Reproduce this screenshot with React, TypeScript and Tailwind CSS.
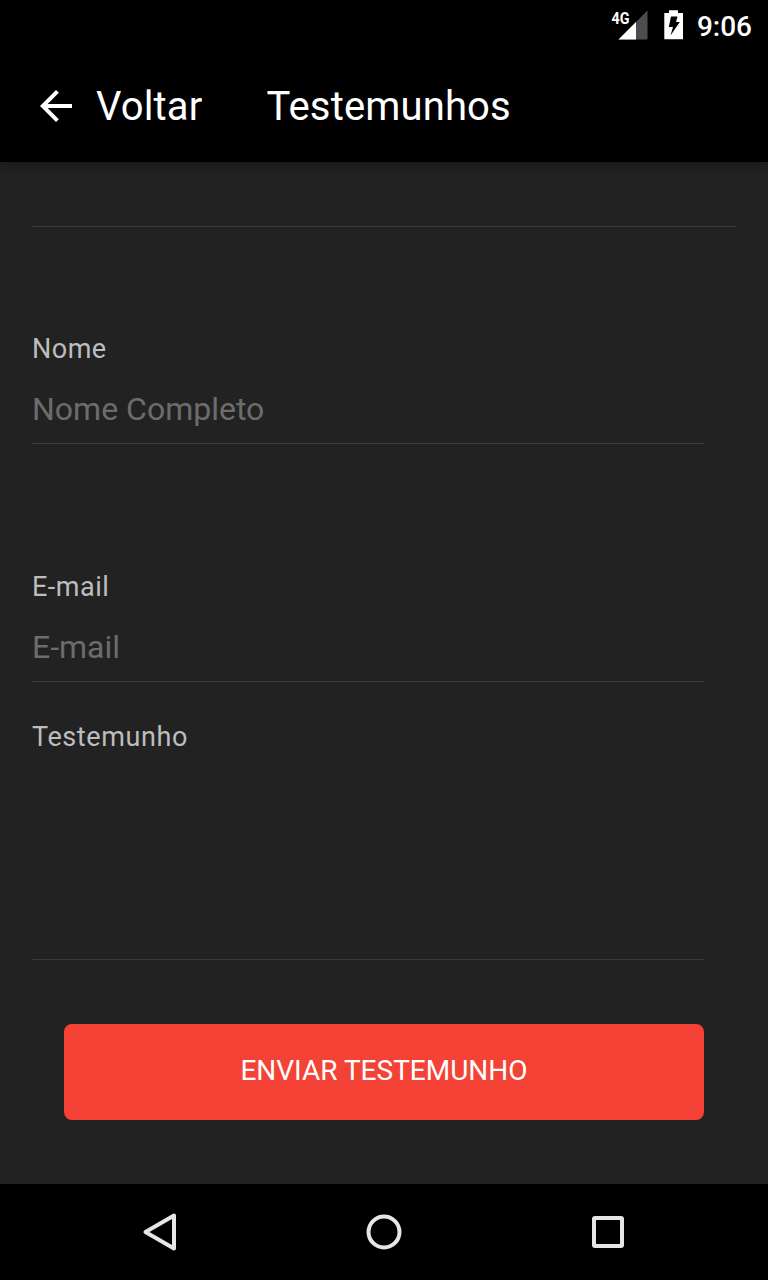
import { MdArrowBack } from "react-icons/md";

const fields = [
    { id: "nome", label: "Nome", placeholder: "Nome Completo" },
    { id: "email", label: "E-mail", placeholder: "E-mail" },
];

const StatusBar = () => {
    return (
        <div className="flex h-12 items-center justify-end pr-4 text-white">
            {/* signal */}
            <svg width="38" height="32" viewBox="0 0 38 32" className="mt-0.5">
                <path d="M37.5 1.5v29H8.5z" fill="#4d4d4d" />
                <path d="M26 13v17.5H8.5z" fill="#fff" />
                <text
                    x="1.5"
                    y="14.5"
                    fill="#fff"
                    fontSize="17"
                    fontWeight="700"
                    textLength="18"
                    lengthAdjust="spacingAndGlyphs"
                >
                    4G
                </text>
            </svg>
            {/* battery */}
            <svg
                width="19"
                height="30"
                viewBox="0 0 19 30"
                className="mt-0.5 ml-4"
            >
                <path d="M5 .3h9V3h5v26.3H.3V3H5z" fill="#fff" />
                <path
                    d="M7 6.5h6.5L12 12h3.8L6.5 25.5 9 17H4.8z"
                    fill="#000"
                />
            </svg>
            <div className="mt-1.5 ml-3.5 text-[28px] leading-8 font-medium">
                9:06
            </div>
        </div>
    );
};

const Header = () => {
    return (
        <header className="relative h-[162px] bg-black text-white shadow-[0_2px_12px_rgba(0,0,0,0.4)]">
            <StatusBar />
            <div className="flex h-[116px] items-center pl-8 text-[40px] tracking-[0.15px]">
                <MdArrowBack size={48} />
                <div className="mt-0.5 ml-4">Voltar</div>
                <h1 className="mt-0.5 ml-16">Testemunhos</h1>
            </div>
        </header>
    );
};

const NavBar = () => {
    return (
        <nav className="flex h-24 items-center justify-center gap-32 bg-black">
            <svg width="96" height="96" viewBox="0 0 96 96" fill="none">
                <path
                    d="M62 31.5v33L33.5 48z"
                    stroke="#e6e6e6"
                    strokeWidth="4"
                    strokeLinejoin="round"
                />
            </svg>
            <svg width="96" height="96" viewBox="0 0 96 96" fill="none">
                <circle
                    cx="48"
                    cy="48"
                    r="15.5"
                    stroke="#e6e6e6"
                    strokeWidth="4"
                />
            </svg>
            <svg width="96" height="96" viewBox="0 0 96 96" fill="none">
                <rect
                    x="34"
                    y="34"
                    width="28"
                    height="28"
                    rx="1"
                    stroke="#e6e6e6"
                    strokeWidth="4"
                />
            </svg>
        </nav>
    );
};

const App = () => {
    return (
        <div className="flex h-[1280px] w-[768px] flex-col bg-[#222] font-['Roboto',sans-serif]">
            <Header />
            <main className="flex-1 pl-8">
                <hr className="mt-16 mr-8 border-[#393939]" />
                <form className="mr-16">
                    {fields.map((f) => (
                        <div
                            key={f.id}
                            className="flex h-[238px] flex-col pt-[127px] first:h-[217px] first:pt-[106px]"
                        >
                            <label
                                htmlFor={f.id}
                                className="text-[27px] leading-8 tracking-[0.5px] text-[#bdbdbd]"
                            >
                                {f.label}
                            </label>
                            <input
                                id={f.id}
                                placeholder={f.placeholder}
                                className="mt-2 h-[71px] border-b border-[#393939] pt-0.5 text-[32px] text-white outline-none placeholder:text-[#6c6c6c]"
                            />
                        </div>
                    ))}
                    <div className="flex h-[278px] flex-col pt-[39px]">
                        <label
                            htmlFor="testemunho"
                            className="text-[27px] leading-8 tracking-[0.6px] text-[#bdbdbd]"
                        >
                            Testemunho
                        </label>
                        <textarea
                            id="testemunho"
                            className="flex-1 resize-none border-b border-[#393939] text-[32px] text-white outline-none"
                        />
                    </div>
                    <button
                        type="button"
                        className="mt-16 ml-8 h-24 w-[640px] rounded-lg bg-[#f44336] pb-0.5 text-[28px] text-white uppercase"
                    >
                        Enviar Testemunho
                    </button>
                </form>
            </main>
            <NavBar />
        </div>
    );
};

export default App;
